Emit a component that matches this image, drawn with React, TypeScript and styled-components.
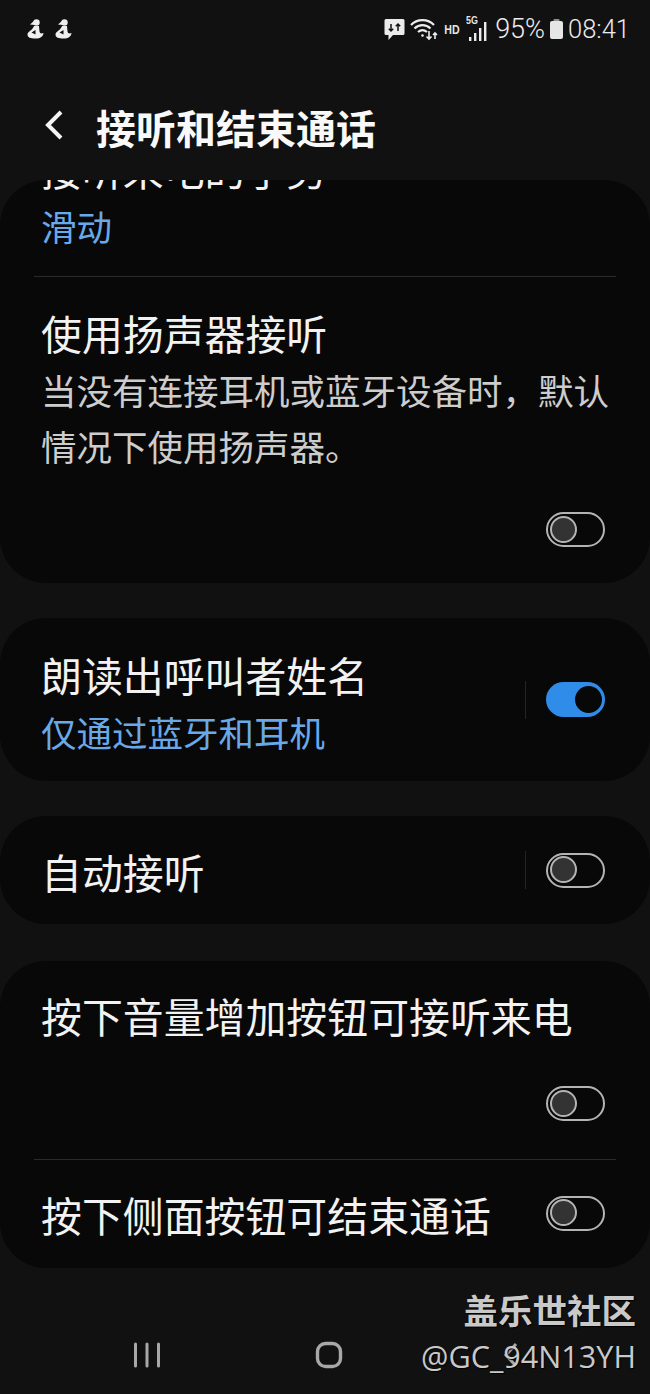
import React from "react";
import styled, { createGlobalStyle } from "styled-components";

const Global = createGlobalStyle`
  html, body { margin: 0; padding: 0; background: #111112; }
  * { box-sizing: border-box; }
`;

const Page = styled.div`
  position: relative;
  width: 650px;
  height: 1394px;
  overflow: hidden;
  display: flex;
  flex-direction: column;
  background: #111112;
  color: #f2f2f2;
  font-family: "Noto Sans CJK SC", "Noto Sans", sans-serif;
`;

const StatusBar = styled.div`
  height: 58px;
  flex: none;
  display: flex;
  align-items: center;
  justify-content: space-between;
  padding: 0 20px 0 27px;
`;

const StatusGroup = styled.div<{ $gap: number }>`
  display: flex;
  align-items: center;
  gap: ${(p) => p.$gap}px;
`;

const StatusText = styled.span<{ $size: number }>`
  font-family: Roboto, "Liberation Sans", sans-serif;
  font-size: ${(p) => p.$size}px;
  font-weight: 300;
  line-height: 30px;
  color: #ececec;
`;

const Hd = styled.span`
  font-family: "Liberation Sans", sans-serif;
  font-size: 12.5px;
  font-weight: 700;
  color: #e4e4e4;
  transform: scaleX(0.85);
  margin-top: 1px;
`;

const SignalWrap = styled.div`
  position: relative;
  width: 24px;
  height: 30px;
`;

const FiveG = styled.span`
  position: absolute;
  left: 0;
  top: 0;
  font-family: "Liberation Sans", sans-serif;
  font-size: 10.5px;
  font-weight: 700;
  line-height: 12px;
  color: #e4e4e4;
  transform: scaleX(0.85);
  transform-origin: left;
`;

const Header = styled.header`
  height: 122px;
  flex: none;
  display: flex;
  align-items: center;
  padding: 20px 0 0 44px;
  gap: 32px;
`;

const Title = styled.h1`
  margin: -4px 0 0;
  font-size: 40px;
  font-weight: 700;
  line-height: 56px;
  color: #f9f9f9;
`;

const BackIcon = styled.svg`
  width: 20px;
  height: 32px;
  margin-top: -8px;
`;

const List = styled.main`
  display: flex;
  flex-direction: column;
`;

const Card = styled.section<{ $height: number; $after: number }>`
  height: ${(p) => p.$height}px;
  margin-bottom: ${(p) => p.$after}px;
  background: #080808;
  border-radius: 46px;
  overflow: hidden;
  display: flex;
  flex-direction: column;
`;

const ClippedRow = styled.div`
  margin-top: -41px;
  padding: 0 41px 22px;
`;

const Row = styled.div<{ $top: number }>`
  padding: ${(p) => p.$top}px 41px 0;
`;

const InlineRow = styled.div<{ $height: number }>`
  height: ${(p) => p.$height}px;
  padding: 0 45px 0 41px;
  display: flex;
  align-items: center;
  justify-content: space-between;
`;

const TextBlock = styled.div<{ $nudge: number }>`
  padding-top: ${(p) => p.$nudge}px;
`;

const RowTitle = styled.div`
  font-size: 40.9px;
  line-height: 59px;
  font-weight: 400;
  color: #f2f2f2;
  white-space: nowrap;
`;

const RowSub = styled.div`
  font-size: 35.5px;
  line-height: 56px;
  color: #cdcdcd;
  white-space: nowrap;
`;

const RowValue = styled(RowSub)`
  color: #69a9ea;
`;

const Divider = styled.hr`
  margin: 0 34px;
  border: 0;
  height: 1px;
  flex: none;
  background: #2a2a2b;
`;

const Controls = styled.div`
  display: flex;
  align-items: center;
  gap: 20px;
`;

const VRule = styled.span`
  width: 1px;
  height: 38px;
  background: #242425;
`;

const ToggleLine = styled.div<{ $top: number; $bottom?: number }>`
  display: flex;
  justify-content: flex-end;
  padding: ${(p) => p.$top}px 45px ${(p) => p.$bottom ?? 0}px 0;
`;

const Toggle = styled.span<{ $on?: boolean }>`
  position: relative;
  display: block;
  width: 59px;
  height: 35px;
  border-radius: 18px;
  border: ${(p) => (p.$on ? "0" : "2.5px solid #b4b4b4")};
  background: ${(p) => (p.$on ? "#2f8ce9" : "transparent")};
`;

const Knob = styled.span<{ $on?: boolean }>`
  position: absolute;
  width: 27px;
  height: 27px;
  border-radius: 50%;
  top: ${(p) => (p.$on ? "4px" : "1.5px")};
  left: ${(p) => (p.$on ? "29px" : "1.5px")};
  background: ${(p) => (p.$on ? "#080808" : "#333334")};
  border: ${(p) => (p.$on ? "0" : "2.5px solid #b4b4b4")};
`;

const NavBar = styled.nav`
  flex: 1;
  display: grid;
  grid-template-columns: repeat(3, 182px);
  justify-items: center;
  align-items: center;
  padding: 48px 0 0 56px;
`;

const Watermark = styled.div`
  position: absolute;
  right: 14px;
  top: 1285px;
  display: flex;
  flex-direction: column;
  align-items: flex-end;
  color: #c9c9c9;
`;

const WatermarkTitle = styled.div`
  font-size: 34.5px;
  font-weight: 700;
  line-height: 48px;
  text-shadow: 1px 1px 1px #000;
`;

const WatermarkId = styled.div`
  font-family: "Open Sans", "Noto Sans", sans-serif;
  font-size: 30.6px;
  line-height: 46px;
  text-shadow: 1px 1px 1px #000;
`;

const Person = () => (
  <svg width="17" height="20" viewBox="0 0 17 20" fill="#efefef">
    <circle cx="9.500" cy="3.500" r="3.200" />
    <path d="M8 1 L3 5.500 L8 6 Z" />
    <path d="M7 7 h5 l.5 5.500 c.4 2 1.800 2.500 4 1.500 c-.3 3.500 -3 5.500 -8 5.500 c-5 0 -8 -1 -8 -4 c0 -3 5 -4 6.500 -8.500 z" />
    <path d="M4.500 13.500 L8.500 11 L8.500 15.500 Z" fill="#111112" />
  </svg>
);

const MessageIcon = () => (
  <svg width="21" height="23" viewBox="0 0 21 23">
    <path d="M2 1 h17 a1.500 1.500 0 0 1 1.500 1.500 v13 a1.500 1.500 0 0 1 -1.500 1.500 h-10 l-4.500 5 v-5 h-2.500 a1.500 1.500 0 0 1 -1.500 -1.500 v-13 a1.500 1.500 0 0 1 1.500 -1.500 z" fill="#ececec" />
    <path d="M7 6 v7 M4.800 10.800 L7 13 L9.200 10.800 M14 13 v-7 M11.800 8.200 L14 6 L16.200 8.200" stroke="#111" strokeWidth="1.500" fill="none" />
  </svg>
);

const WifiIcon = () => (
  <svg width="28" height="24" viewBox="0 0 28 24" fill="none" stroke="#ececec" strokeWidth="2.200">
    <path d="M1 8 C7 1.500 18 1.500 24 8" />
    <path d="M4.500 11.500 C9 7 16 7 20.500 11.500" />
    <path d="M8 15 C11 12.500 14 12.500 17 15" />
    <circle cx="12.500" cy="18.500" r="1.300" fill="#ececec" stroke="none" />
    <path d="M19 14 v8 M16.500 19.500 L19 22 L21.500 19.500 M25 22 v-6 M23 18 L25 16 L27 18" strokeWidth="1.600" />
  </svg>
);

const SignalBars = () => (
  <svg width="24" height="30" viewBox="0 0 24 30" fill="#ececec">
    <rect x="3" y="23" width="2.400" height="4" />
    <rect x="8" y="19" width="2.400" height="8" />
    <rect x="13" y="14" width="2.400" height="13" />
    <rect x="18" y="8" width="2.400" height="19" />
  </svg>
);

const BatteryIcon = () => (
  <svg width="13" height="20" viewBox="0 0 13 20" fill="#e6e6e6">
    <rect x="3.500" y="0" width="6" height="3" rx="1" opacity="0.6" />
    <rect x="0" y="2" width="13" height="18" rx="2" />
  </svg>
);

const NavRecents = () => (
  <svg width="28" height="26" viewBox="0 0 28 26" stroke="#a8a8a8" strokeWidth="3" strokeLinecap="round">
    <path d="M2.500 2 V24 M14 2 V24 M25.500 2 V24" />
  </svg>
);

const NavHome = () => (
  <svg width="28" height="28" viewBox="0 0 28 28" fill="none" stroke="#a8a8a8" strokeWidth="3.400">
    <rect x="2.500" y="2.500" width="23" height="23" rx="8" />
  </svg>
);

const NavBack = () => (
  <svg width="16" height="26" viewBox="0 0 16 26" fill="none" stroke="#a8a8a8" strokeWidth="3">
    <path d="M13 2 L3 13 L13 24" />
  </svg>
);

const Switch = ({ on }: { on?: boolean }) => (
  <Toggle $on={on}>
    <Knob $on={on} />
  </Toggle>
);

export default function App() {
  return (
    <Page>
      <Global />
      <StatusBar>
        <StatusGroup $gap={11}>
          <Person />
          <Person />
        </StatusGroup>
        <StatusGroup $gap={5}>
          <MessageIcon />
          <WifiIcon />
          <Hd>HD</Hd>
          <SignalWrap>
            <FiveG>5G</FiveG>
            <SignalBars />
          </SignalWrap>
          <StatusText $size={27}>95%</StatusText>
          <BatteryIcon />
          <StatusText $size={25.5}>08:41</StatusText>
        </StatusGroup>
      </StatusBar>

      <Header>
        <BackIcon viewBox="0 0 20 32" fill="none" stroke="#f5f5f5" strokeWidth="4">
          <path d="M17 3 L4 16 L17 29" />
        </BackIcon>
        <Title>接听和结束通话</Title>
      </Header>

      <List>
        <Card $height={403} $after={35}>
          <ClippedRow>
            <RowTitle>接听来电的手势</RowTitle>
            <RowValue>滑动</RowValue>
          </ClippedRow>
          <Divider />
          <Row $top={26}>
            <RowTitle>使用扬声器接听</RowTitle>
            <RowSub>当没有连接耳机或蓝牙设备时，默认</RowSub>
            <RowSub>情况下使用扬声器。</RowSub>
          </Row>
          <ToggleLine $top={38}>
            <Switch />
          </ToggleLine>
        </Card>

        <Card $height={163} $after={35}>
          <InlineRow $height={163}>
            <TextBlock $nudge={5}>
              <RowTitle>朗读出呼叫者姓名</RowTitle>
              <RowValue>仅通过蓝牙和耳机</RowValue>
            </TextBlock>
            <Controls>
              <VRule />
              <Switch on />
            </Controls>
          </InlineRow>
        </Card>

        <Card $height={108} $after={37}>
          <InlineRow $height={108}>
            <TextBlock $nudge={2}>
              <RowTitle>自动接听</RowTitle>
            </TextBlock>
            <Controls>
              <VRule />
              <Switch />
            </Controls>
          </InlineRow>
        </Card>

        <Card $height={307} $after={0}>
          <Row $top={25}>
            <RowTitle>按下音量增加按钮可接听来电</RowTitle>
          </Row>
          <ToggleLine $top={41} $bottom={38}>
            <Switch />
          </ToggleLine>
          <Divider />
          <InlineRow $height={106}>
            <TextBlock $nudge={2}>
              <RowTitle>按下侧面按钮可结束通话</RowTitle>
            </TextBlock>
            <Controls>
              <Switch />
            </Controls>
          </InlineRow>
        </Card>
      </List>

      <NavBar>
        <NavRecents />
        <NavHome />
        <NavBack />
      </NavBar>

      <Watermark>
        <WatermarkTitle>盖乐世社区</WatermarkTitle>
        <WatermarkId>@GC_94N13YH</WatermarkId>
      </Watermark>
    </Page>
  );
}
